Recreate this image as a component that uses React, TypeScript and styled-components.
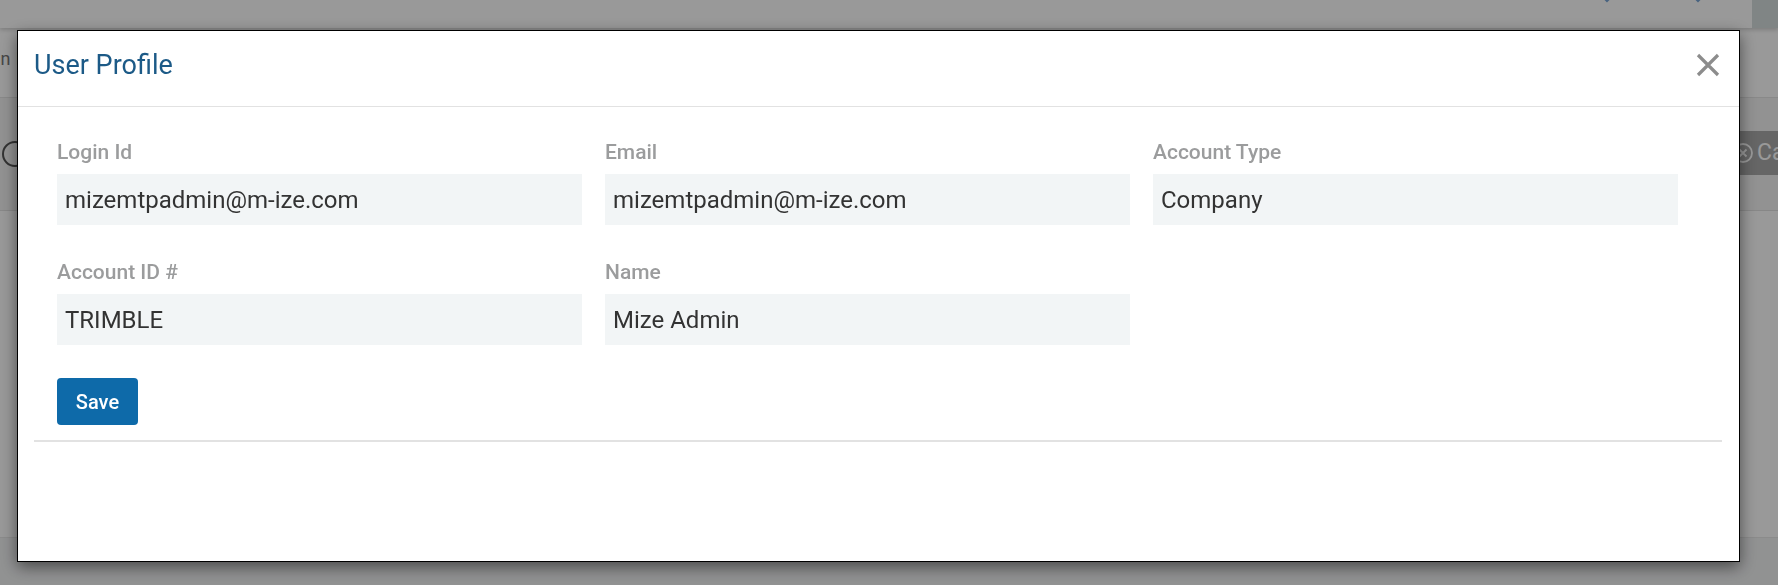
import React from "react";
import styled, { createGlobalStyle } from "styled-components";

const Global = createGlobalStyle`
  html, body { margin: 0; padding: 0; }
  body {
    font-family: Roboto, "Noto Sans", "Liberation Sans", sans-serif;
    background: #ffffff;
    overflow: hidden;
  }
  * { box-sizing: border-box; }
`;

/* ---------- page behind the modal ---------- */
const Page = styled.div`
  width: 1778px;
  height: 585px;
  display: flex;
  flex-direction: column;
  background: #f3f4f5;
`;

const TopBar = styled.header`
  height: 28px;
  background: #ffffff;
  display: flex;
  justify-content: flex-end;
  align-items: flex-start;
  box-shadow: 0 2px 4px rgba(0, 0, 0, 0.18);
  position: relative;
  z-index: 1;
`;

const TopChevron = styled.span<{ $gap: number }>`
  width: 16px;
  height: 16px;
  margin-top: -10px;
  margin-right: ${(p) => p.$gap}px;
  display: flex;
`;

const TopSide = styled.div`
  width: 26px;
  height: 28px;
  background: #d6dede;
`;

const SubHeader = styled.div`
  height: 70px;
  background: #ffffff;
  border-bottom: 1px solid #e4e4e4;
  display: flex;
  align-items: center;
  overflow: hidden;
`;

const SubHeaderText = styled.span`
  margin-left: -31px;
  margin-top: -9px;
  font-size: 18px;
  color: #777;
  white-space: nowrap;
  letter-spacing: 0.5px;
`;

const Toolbar = styled.div`
  height: 113px;
  background: #f4f4f4;
  border-bottom: 1px solid #e2e2e2;
  display: flex;
  align-items: center;
  justify-content: space-between;
  overflow: hidden;
`;

const ToolbarCircle = styled.span`
  width: 26px;
  height: 26px;
  border-radius: 50%;
  border: 2px solid #555;
  margin-left: 2px;
`;

const GhostButton = styled.span`
  height: 44px;
  width: 110px;
  margin-right: -64px;
  margin-top: -3px;
  background: #aaaaaa;
  color: #ffffff;
  font-size: 23px;
  display: flex;
  align-items: center;
  gap: 3px;
  padding-left: 0;
  white-space: nowrap;
`;

const PageBody = styled.div`
  height: 327px;
  background: #ffffff;
  border-bottom: 1px solid #e8e8e8;
`;

const PageFoot = styled.div`
  flex: 1;
  background: #f2f3f4;
`;

/* ---------- modal ---------- */
const Backdrop = styled.div`
  position: fixed;
  inset: 0;
  z-index: 10;
  background: rgba(0, 0, 0, 0.4);
`;

const ModalLayer = styled.div`
  position: fixed;
  inset: 0;
  z-index: 11;
  padding: 30px 0 0 17px;
`;

const Dialog = styled.div`
  width: 1723px;
  height: 532px;
  background: #ffffff;
  border: 1px solid #000;
  box-shadow: 0 5px 15px rgba(0, 0, 0, 0.5);
  display: flex;
  flex-direction: column;
`;

const Header = styled.div`
  height: 76px;
  border-bottom: 1px solid #e2e2e2;
  display: flex;
  align-items: center;
  justify-content: space-between;
  padding: 0 18px 7px 16px;
`;

const Title = styled.h4`
  margin: 0;
  font-size: 27px;
  font-weight: 400;
  color: #1c5a87;
  line-height: 1;
`;

const CloseButton = styled.button`
  border: 0;
  background: transparent;
  padding: 0;
  width: 26px;
  height: 26px;
  display: flex;
  align-items: center;
  justify-content: center;
  cursor: pointer;
`;

const Body = styled.div`
  padding: 34px 39px 0 39px;
`;

const FieldGrid = styled.div`
  display: grid;
  grid-template-columns: repeat(3, 525px);
  column-gap: 23px;
  row-gap: 36px;
`;

const Field = styled.div`
  display: flex;
  flex-direction: column;
`;

const Label = styled.label`
  font-size: 21px;
  font-weight: 500;
  line-height: 22px;
  color: #9b9c9d;
  margin-bottom: 11px;
`;

const Value = styled.div`
  height: 51px;
  background: #f2f5f6;
  padding: 0 8px;
  display: flex;
  align-items: center;
  font-size: 24px;
  color: #333333;
`;

const SaveButton = styled.button`
  margin-top: 33px;
  width: 81px;
  height: 47px;
  border: 0;
  border-radius: 4px;
  background: #0e6aa9;
  color: #ffffff;
  font-family: inherit;
  font-size: 20px;
  font-weight: 500;
  cursor: pointer;
`;

const Footer = styled.div`
  margin: 15px 17px 0 16px;
  border-top: 2px solid #e2e2e2;
`;

const Chevron = () => (
  <svg width="16" height="16" viewBox="0 0 16 16">
    <path d="M3 5l5 5 5-5" fill="none" stroke="#7aa6d6" strokeWidth="3.5" />
  </svg>
);

const CircleX = () => (
  <svg width="22" height="22" viewBox="0 0 22 22">
    <circle cx="11" cy="11" r="9" fill="none" stroke="#ffffff" strokeWidth="1.8" />
    <path d="M7.5 7.5l7 7M14.5 7.5l-7 7" stroke="#ffffff" strokeWidth="1.8" />
  </svg>
);

const fields = [
  { label: "Login Id", value: "mizemtpadmin@m-ize.com" },
  { label: "Email", value: "mizemtpadmin@m-ize.com" },
  { label: "Account Type", value: "Company" },
  { label: "Account ID #", value: "TRIMBLE" },
  { label: "Name", value: "Mize Admin" },
];

export default function App() {
  return (
    <>
      <Global />
      <Page>
        <TopBar>
          <TopChevron $gap={75}>
            <Chevron />
          </TopChevron>
          <TopChevron $gap={46}>
            <Chevron />
          </TopChevron>
          <TopSide />
        </TopBar>
        <SubHeader>
          <SubHeaderText>Main Info</SubHeaderText>
        </SubHeader>
        <Toolbar>
          <ToolbarCircle />
          <GhostButton>
            <CircleX />
            Cancel
          </GhostButton>
        </Toolbar>
        <PageBody />
        <PageFoot />
      </Page>
      <Backdrop />
      <ModalLayer>
        <Dialog role="dialog" aria-label="User Profile">
          <Header>
            <Title>User Profile</Title>
            <CloseButton aria-label="Close">
              <svg width="24" height="24" viewBox="0 0 24 24">
                <path
                  d="M2 2L22 22M22 2L2 22"
                  stroke="#8c8c8c"
                  strokeWidth="3.2"
                  fill="none"
                />
              </svg>
            </CloseButton>
          </Header>
          <Body>
            <FieldGrid>
              {fields.map((f) => (
                <Field key={f.label}>
                  <Label>{f.label}</Label>
                  <Value>{f.value}</Value>
                </Field>
              ))}
            </FieldGrid>
            <SaveButton>Save</SaveButton>
          </Body>
          <Footer />
        </Dialog>
      </ModalLayer>
    </>
  );
}
